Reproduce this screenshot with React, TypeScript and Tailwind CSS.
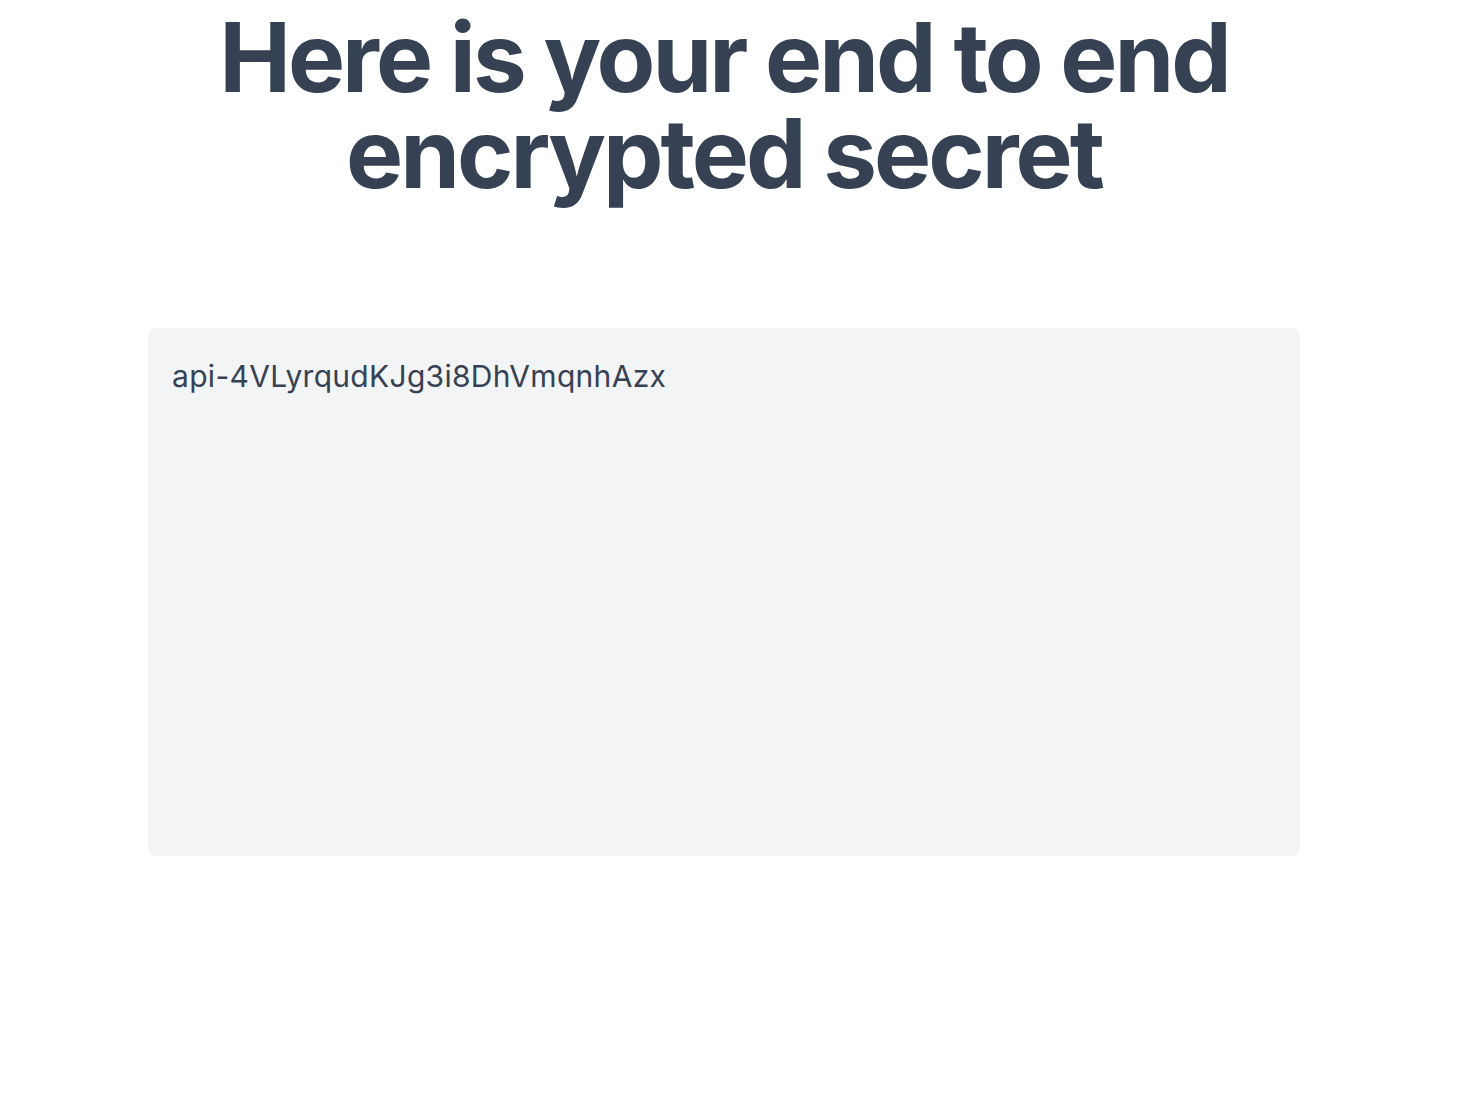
import React from "react";

export default function App() {
  const secret = "api-4VLyrqudKJg3i8DhVmqnhAzx";

  return (
    <div className="min-h-screen bg-white font-['Inter',sans-serif]">
      <div className="w-[1448px] flex flex-col items-center pt-[9px]">
        <h1 className="text-8xl font-bold text-center text-gray-700 tracking-[-0.031em]">
          Here is your end to end
          <br />
          encrypted secret
        </h1>
        <div className="mt-[127px] w-[1152px] h-[528px] bg-gray-100 rounded-lg px-6 pt-[30px] pb-6">
          <p className="text-3xl text-gray-700 tracking-[0.01em]">{secret}</p>
        </div>
      </div>
    </div>
  );
}
